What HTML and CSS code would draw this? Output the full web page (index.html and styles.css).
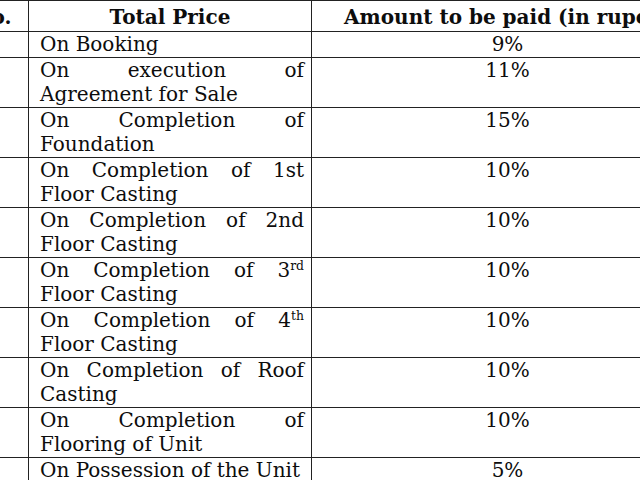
FILE: index.html
```html
<!DOCTYPE html>
<html lang="en">
<head>
<meta charset="utf-8">
<title>Payment Schedule</title>
<link rel="stylesheet" href="styles.css">
</head>
<body>
<div class="page">
  <table class="schedule">
    <colgroup>
      <col class="c-no">
      <col class="c-stage">
      <col class="c-amt">
    </colgroup>
    <thead>
      <tr>
        <th class="h-no">S. No.</th>
        <th>Total Price</th>
        <th class="h-amt">Amount to be paid (in rupees)</th>
      </tr>
    </thead>
    <tbody>
      <tr><td></td><td class="stage">On Booking</td><td class="amt">9%</td></tr>
      <tr><td></td><td class="stage">On execution of Agreement for Sale</td><td class="amt">11%</td></tr>
      <tr><td></td><td class="stage">On Completion of Foundation</td><td class="amt">15%</td></tr>
      <tr><td></td><td class="stage">On Completion of 1st Floor Casting</td><td class="amt">10%</td></tr>
      <tr><td></td><td class="stage">On Completion of 2nd Floor Casting</td><td class="amt">10%</td></tr>
      <tr><td></td><td class="stage">On Completion of 3<sup>rd</sup> Floor Casting</td><td class="amt">10%</td></tr>
      <tr><td></td><td class="stage">On Completion of 4<sup>th</sup> Floor Casting</td><td class="amt">10%</td></tr>
      <tr><td></td><td class="stage">On Completion of Roof Casting</td><td class="amt">10%</td></tr>
      <tr><td></td><td class="stage">On Completion of Flooring of Unit</td><td class="amt">10%</td></tr>
      <tr><td></td><td class="stage">On Possession of the Unit</td><td class="amt">5%</td></tr>
    </tbody>
  </table>
</div>
</body>
</html>
```

FILE: styles.css
```css
html, body {
  margin: 0;
  padding: 0;
  background: #ffffff;
}

.page {
  width: 640px;
  height: 480px;
  overflow: hidden;
}

.schedule {
  margin-left: -72px;
  border-collapse: collapse;
  table-layout: fixed;
  width: 800px;
  font-family: "DejaVu Serif", "Liberation Serif", serif;
  font-size: 20px;
  line-height: 24px;
  color: #0d0d0d;
}

.c-no { width: 100px; }
.c-stage { width: 283px; }
.c-amt { width: 417px; }

.schedule th,
.schedule td {
  border: 1px solid #222222;
  padding: 0 0 1px 0;
  vertical-align: top;
}

.schedule th {
  font-weight: bold;
  text-align: center;
  padding: 4px 0 2px 0;
  white-space: nowrap;
  overflow: hidden;
}

.schedule .h-amt {
  padding-right: 14px;
}

.schedule .stage {
  text-align: justify;
  padding: 0 7px 1px 11px;
}

.schedule .amt {
  text-align: center;
  padding-right: 25px;
}

.schedule sup {
  font-size: 0.62em;
  line-height: 0;
  vertical-align: 0.55em;
}
```
